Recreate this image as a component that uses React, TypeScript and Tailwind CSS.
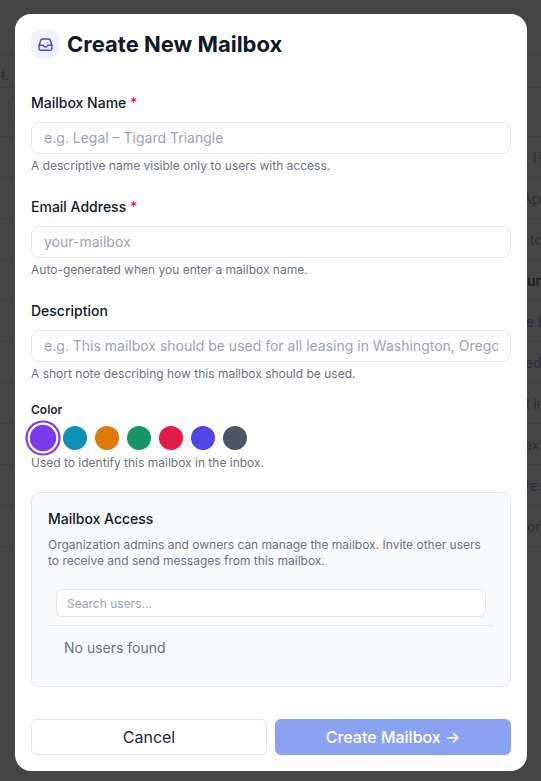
import React from "react";

const font = { fontFamily: "Inter, sans-serif" };

function Field({ label, required, placeholder, help }: { label: string; required?: boolean; placeholder: string; help: string }) {
  return (
    <div className="flex flex-col">
      <label className="text-[14px] leading-[20px] font-medium text-[#111827] mb-[9px]">
        {label}
        {required && <span className="text-[#e11d48]"> *</span>}
      </label>
      <input
        readOnly
        placeholder={placeholder}
        className="h-[32px] w-full rounded-[8px] border border-[#e5e7eb] bg-white px-[12px] pb-[2px] text-[14px] text-[#111827] placeholder:text-[#9ca3af] outline-none"
      />
      <p className="mt-[4px] text-[12px] leading-[16px] text-[#6b7280]">{help}</p>
    </div>
  );
}

const colors = ["#7c3aed", "#0e91b2", "#dd7706", "#169668", "#e11d48", "#4f46e5", "#4b5563"];

const rows = [
  { t: ".\u00a0I\u200as", c: "pl-[525px] text-[#2b3038]" },
  { t: "Apr", c: "pl-[522px] text-[#2b3038]" },
  { t: "to", c: "pl-[530px] text-[#2b3038]" },
  { t: "uml", c: "pl-[527px] font-semibold text-[#1c2028]" },
  { t: "e b", c: "pl-[526px] text-[#2b3038]" },
  { t: "ed", c: "pl-[525px] text-[#2b3038]" },
  { t: "l in", c: "pl-[526px] text-[#2b3038]" },
  { t: "ext", c: "pl-[524px] text-[#2b3038]" },
  { t: "res", c: "pl-[525px] text-[#2b3038]" },
  { t: "ori", c: "pl-[527px] text-[#2b3038]" },
];

const rowBase = "flex h-[41px] items-center overflow-hidden border-b border-[#3f3f3f] text-[14px] whitespace-nowrap ";

export default function App() {
  return (
    <div style={font} className="relative h-[781px] w-[541px] overflow-hidden bg-[#454545]">
      {/* page behind the dialog, dimmed */}
      <div className="flex flex-col">
        <div className="h-[55px] border-b border-[#3f3f3f]" />
        <div className="h-[33px] border-b border-[#3f3f3f] pt-[10px] pl-[1px] text-[14px] leading-[20px] text-[#2b3038]">t.</div>
        <div className="h-[49px] border-b border-[#3f3f3f] pt-[9px] pl-[8px]">
          <div className="h-[31px] w-[40px] rounded-[6px] border border-[#3f3f3f]" />
        </div>
        {rows.map((r) => (
          <div key={r.t} className={rowBase + r.c}>
            {r.t}
          </div>
        ))}
      </div>

      {/* dialog */}
      <div className="absolute top-[14px] left-[15px] flex h-[757px] w-[512px] flex-col rounded-[16px] bg-white p-[16px]">
        <div className="flex items-center gap-[8px]">
          <div className="flex h-[28px] w-[28px] items-center justify-center rounded-[8px] bg-[#eef2ff]">
            <svg width="17" height="17" viewBox="0 0 24 24" fill="none" stroke="#4f46e5" strokeWidth="2" strokeLinecap="round" strokeLinejoin="round">
              <path d="M3 13.5 5.5 5.6A2 2 0 0 1 7.4 4.2h9.2a2 2 0 0 1 1.9 1.4L21 13.5V18a2 2 0 0 1-2 2H5a2 2 0 0 1-2-2z" />
              <path d="M3 13h5c.5 0 1 .4 1.2.9.4 1 1.4 1.6 2.8 1.6s2.4-.6 2.8-1.6c.2-.5.7-.9 1.2-.9h5" />
            </svg>
          </div>
          <h2 className="text-[22px] leading-[28px] font-bold text-[#111827]">Create New Mailbox</h2>
        </div>
        <div className="mt-[35px] flex flex-col gap-[23px]">
          <Field label="Mailbox Name" required placeholder="e.g. Legal – Tigard Triangle" help="A descriptive name visible only to users with access." />
          <Field label="Email Address" required placeholder="your-mailbox" help="Auto-generated when you enter a mailbox name." />
          <Field label="Description" placeholder="e.g. This mailbox should be used for all leasing in Washington, Oregon and Idaho." help="A short note describing how this mailbox should be used." />
        </div>
        <div className="mt-[20px]">
          <div className="text-[12px] leading-[16px] font-semibold text-[#1f2937]">Color</div>
          <div className="mt-[8px] flex items-center gap-[8px]">
            {colors.map((c, i) => (
              <span
                key={c}
                style={{ backgroundColor: c }}
                className={i === 0 ? "h-[24px] w-[24px] scale-110 rounded-full ring-2 ring-[#7c3aed] ring-offset-2 ring-offset-white" : "h-[24px] w-[24px] rounded-full"}
              />
            ))}
          </div>
          <p className="mt-[5px] text-[12px] leading-[16px] text-[#6b7280]">Used to identify this mailbox in the inbox.</p>
        </div>
        <div className="mt-[21px] h-[195px] rounded-[8px] border border-[#e5e7eb] bg-[#f9fafb] p-[16px]">
          <h3 className="text-[14px] leading-[20px] font-medium text-[#111827]">Mailbox Access</h3>
          <p className="mt-[8px] text-[12px] leading-[16px] text-[#6b7280]">Organization admins and owners can manage the mailbox. Invite other users to receive and send messages from this mailbox.</p>
          <div className="mt-[20px] border-b border-[#e5e7eb] px-[8px] pb-[8px]">
            <input
              readOnly
              placeholder="Search users..."
              className="h-[28px] w-full rounded-[6px] border border-[#e5e7eb] bg-white px-[10px] text-[12px] text-[#111827] placeholder:text-[#9ca3af] outline-none"
            />
          </div>
          <p className="mt-[12px] pl-[16px] text-[14px] leading-[20px] text-[#6b7280]">No users found</p>
        </div>
        <div className="mt-auto grid grid-cols-2 gap-[8px]">
          <button className="h-[36px] rounded-[6px] border border-[#e5e7eb] bg-white text-[16px] text-[#1f2937]">Cancel</button>
          <button className="h-[36px] rounded-[6px] bg-[#8ba2f3] text-[16px] font-medium text-white">Create Mailbox →</button>
        </div>
      </div>
    </div>
  );
}
